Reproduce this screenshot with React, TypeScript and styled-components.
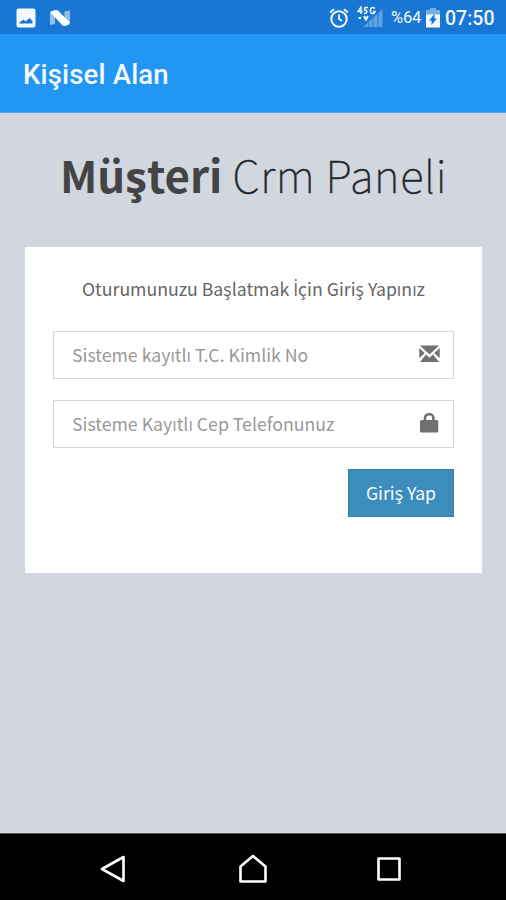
import React from 'react';
import styled, { createGlobalStyle } from 'styled-components';

const sans = '"Noto Sans CJK SC", "Open Sans", sans-serif';

const GlobalStyle = createGlobalStyle`
  * { box-sizing: border-box; }
  body { margin: 0; background: #d2d6de; }
`;

const Screen = styled.div`
  display: flex;
  flex-direction: column;
  width: 506px;
  height: 900px;
  overflow: hidden;
  background: #d2d6de;
  font-family: ${sans};
`;

const StatusBar = styled.header`
  display: flex;
  justify-content: space-between;
  height: 34px;
  padding: 0 11px 0 16px;
  background: #1976d2;
  color: #f2f8fd;
  font-family: Roboto, sans-serif;
`;

const StatusGroup = styled.div<{ $gap?: number }>`
  display: flex;
  align-items: center;
  gap: ${p => p.$gap ?? 0}px;
  height: 35px;
`;

const BatteryLevel = styled.span`
  width: 32px;
  margin: 1px 3px 0 7px;
  font-size: 16.5px;
  line-height: 20px;
  letter-spacing: -0.2px;
  white-space: nowrap;
`;

const Clock = styled.span`
  width: 50px;
  margin: 2px 0 0 5px;
  font-size: 19.5px;
  font-weight: 500;
  line-height: 22px;
  white-space: nowrap;
`;

const AppBar = styled.div`
  display: flex;
  align-items: center;
  height: 79px;
  padding: 3px 23px 0;
  border-bottom: 1px solid #4ba5ee;
  background: #2196f3;
`;

const AppTitle = styled.h1`
  margin: 0;
  color: #f4faff;
  font: 500 27.5px/32px Roboto, sans-serif;
  letter-spacing: 0.18px;
`;

const Content = styled.main`
  display: flex;
  flex: 1;
  flex-direction: column;
  padding: 26px 24px 0 25px;
`;

const Brand = styled.h2`
  display: flex;
  justify-content: center;
  gap: 10px;
  margin: 0 0 38px;
  color: #222529;
  font-size: 43.8px;
  line-height: 70px;
  white-space: nowrap;
`;

const BrandStrong = styled.b`
  color: #444;
  font-weight: 700;
`;

const BrandLight = styled.span`
  font-weight: 100;
  letter-spacing: 0.65px;
  -webkit-text-stroke: 0.5px #222529;
`;

const Card = styled.form`
  display: flex;
  flex-direction: column;
  height: 326px;
  padding: 26px 28px 0;
  background: #fff;
`;

const Hint = styled.p`
  margin: 0 0 27px;
  color: #666;
  font-size: 17.7px;
  line-height: 30px;
  text-align: center;
  white-space: nowrap;
`;

const DottedCapital = styled.span`
  font-family: "Open Sans", sans-serif;
`;

const Field = styled.label`
  display: flex;
  justify-content: space-between;
  height: 48px;
  margin-bottom: 21px;
  padding: 7px 13px 0 18px;
  border: 1px solid #d2d6de;
`;

const Placeholder = styled.span`
  color: #999;
  font-size: 17.7px;
  line-height: 30px;
  white-space: nowrap;
`;

const Submit = styled.button`
  align-self: flex-end;
  width: 106px;
  height: 48px;
  padding: 0 0 2px;
  border: 1px solid #367fa9;
  background: #3c8dbc;
  color: #f5fbff;
  font-family: inherit;
  font-size: 17.7px;
  line-height: 30px;
`;

const NavBar = styled.nav`
  display: flex;
  align-items: center;
  justify-content: space-between;
  height: 67px;
  padding: 4px 102px 0 99px;
  border-top: 1px solid #55575b;
  background: #000;
`;

const Icon = styled.svg<{ $push?: number; $drop?: number }>`
  display: block;
  flex: none;
  margin-left: ${p => p.$push ?? 0}px;
  margin-top: ${p => p.$drop ?? 0}px;
`;

const Picture = () => (
  <Icon width="20" height="20" viewBox="0 0 20 20">
    <path fill="#f4f9fe" fillRule="evenodd" d="M2.500 .5h15a2 2 0 0 1 2 2v15a2 2 0 0 1-2 2h-15a2 2 0 0 1-2-2v-15a2 2 0 0 1 2-2ZM3.500 15.500h13V13l-3-3-4 3.500L7.500 11.500 3.500 14.500Z" />
  </Icon>
);

const Nougat = () => (
  <Icon width="22" height="18" viewBox="0 0 22 18">
    <path fill="#8fbfec" d="M1 3l5-1v13l-5 1ZM15.500 2.500l5.500-1V14l-5.500 1.500Z" />
    <path fill="#fff" d="M1 3 6 1 9 1.500 21 13.500 20 15.500 16 17 13.500 16.500Z" />
  </Icon>
);

const Alarm = () => (
  <Icon width="20" height="20" viewBox="0 0 20 20" fill="none" stroke="#f0f7fd" strokeWidth="2">
    <circle cx="10" cy="11" r="7.700" />
    <path d="M10 6.500V11l3 2M1 4.500 5 1.200M19 4.500 15 1.200" strokeWidth="1.800" />
  </Icon>
);

const Signal = () => (
  <Icon $push={8} width="27" height="24" viewBox="0 0 27 24">
    <path fill="#5ea2e2" d="M6 21 25.500 3v18Z" />
    <path stroke="#1976d2" strokeWidth=".8" d="M11.500 16v5M16 12v9M21 7v14" />
    <g fill="none" stroke="#f0f7fd" strokeWidth="1.500">
      <path d="M4 8V1L1 5.500h4.500M11 1.500H8L7.500 4c3-.5 3.500 3.500-.5 3.500M18 2.500c-3-2.500-5 0-4.500 3s4 2.500 4.500 0h-2" />
      <path d="M1.500 12h2.500M7 10l2 3.500 2-3.500" strokeWidth="2" />
    </g>
  </Icon>
);

const Battery = () => (
  <Icon width="14" height="20" viewBox="0 0 14 20">
    <path fill="#75afe5" d="M4 0h6v2h4v5H0V2h4Z" />
    <path fill="#f4f9fe" d="M0 6.500h14V19.500H0Z" />
    <path fill="#1976d2" d="M8.500 6v4.500H11L5.500 17v-4.500H3Z" />
  </Icon>
);

const Envelope = () => (
  <Icon $drop={6} width="21" height="18" viewBox="0 0 21 18" fill="#707070">
    <path d="M1 .5h19L10.500 9.500ZM.3 3l5.500 5.300L.3 13ZM20.700 3l-5.500 5.300 5.500 4.700ZM7 9.500l3.500 3.200L14 9.500l6 7.500H1Z" />
  </Icon>
);

const Lock = () => (
  <Icon $drop={4} width="21" height="22" viewBox="0 0 21 22">
    <path fill="none" stroke="#707070" strokeWidth="2.600" d="M6 10V6a3.700 3.700 0 0 1 3.700-3.700h1a3.700 3.700 0 0 1 3.700 3.700v4" />
    <rect x="1" y="8" width="18.300" height="12.500" rx="1.500" fill="#707070" />
  </Icon>
);

const NavIcon = styled(Icon).attrs({
  width: 30,
  height: 30,
  viewBox: '0 0 30 30',
  fill: 'none',
  stroke: '#fff',
  strokeWidth: 2.6,
})`
  stroke-linejoin: round;
`;

export default function App() {
  return (
    <>
      <GlobalStyle />
      <Screen>
        <StatusBar>
          <StatusGroup $gap={13}>
            <Picture />
            <Nougat />
          </StatusGroup>
          <StatusGroup>
            <Alarm />
            <Signal />
            <BatteryLevel>%64</BatteryLevel>
            <Battery />
            <Clock>07:50</Clock>
          </StatusGroup>
        </StatusBar>
        <AppBar>
          <AppTitle>Kişisel Alan</AppTitle>
        </AppBar>
        <Content>
          <Brand>
            <BrandStrong>Müşteri</BrandStrong>
            <BrandLight>Crm Paneli</BrandLight>
          </Brand>
          <Card>
            <Hint>
              Oturumunuzu Başlatmak <DottedCapital>İ</DottedCapital>çin Giriş Yapınız
            </Hint>
            <Field>
              <Placeholder>Sisteme kayıtlı T.C. Kimlik No</Placeholder>
              <Envelope />
            </Field>
            <Field>
              <Placeholder>Sisteme Kayıtlı Cep Telefonunuz</Placeholder>
              <Lock />
            </Field>
            <Submit type="button">Giriş Yap</Submit>
          </Card>
        </Content>
        <NavBar>
          <NavIcon><path d="M3 15 24.500 3v24Z" /></NavIcon>
          <NavIcon $push={3}><path d="M2.500 12.500 15 2l12.500 10.500v15h-25Z" /></NavIcon>
          <NavIcon><path d="M4.500 4.500h21v21h-21Z" /></NavIcon>
        </NavBar>
      </Screen>
    </>
  );
}
